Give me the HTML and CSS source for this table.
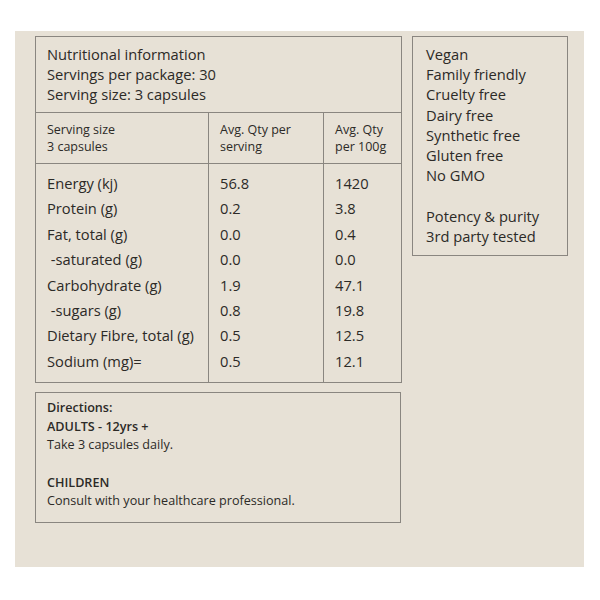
FILE: index.html
```html
<!DOCTYPE html>
<html lang="en">
<head>
<meta charset="utf-8">
<title>Nutritional information</title>
<link rel="stylesheet" href="styles.css">
</head>
<body>
<div class="panel">
  <div class="left">
    <table class="nutri">
      <colgroup>
        <col class="c1"><col class="c2"><col class="c3">
      </colgroup>
      <thead>
        <tr>
          <th colspan="3" class="title">Nutritional information<br>Servings per package: 30<br>Serving size: 3 capsules</th>
        </tr>
        <tr class="colhead">
          <th>Serving size<br>3 capsules</th>
          <th>Avg. Qty per<br>serving</th>
          <th>Avg. Qty<br>per 100g</th>
        </tr>
      </thead>
      <tbody>
        <tr><td>Energy (kj)</td><td>56.8</td><td>1420</td></tr>
        <tr><td>Protein (g)</td><td>0.2</td><td>3.8</td></tr>
        <tr><td>Fat, total (g)</td><td>0.0</td><td>0.4</td></tr>
        <tr><td>&nbsp;-saturated (g)</td><td>0.0</td><td>0.0</td></tr>
        <tr><td>Carbohydrate (g)</td><td>1.9</td><td>47.1</td></tr>
        <tr><td>&nbsp;-sugars (g)</td><td>0.8</td><td>19.8</td></tr>
        <tr><td>Dietary Fibre, total (g)</td><td>0.5</td><td>12.5</td></tr>
        <tr><td>Sodium (mg)=</td><td>0.5</td><td>12.1</td></tr>
      </tbody>
    </table>
    <div class="directions">
      <p class="b">Directions:</p>
      <p class="b">ADULTS - 12yrs +</p>
      <p>Take 3 capsules daily.</p>
      <p>&nbsp;</p>
      <p class="b">CHILDREN</p>
      <p>Consult with your healthcare professional.</p>
    </div>
  </div>
  <div class="claims">
    <p>Vegan</p>
    <p>Family friendly</p>
    <p>Cruelty free</p>
    <p>Dairy free</p>
    <p>Synthetic free</p>
    <p>Gluten free</p>
    <p>No GMO</p>
    <p>&nbsp;</p>
    <p>Potency &amp; purity</p>
    <p>3rd party tested</p>
  </div>
</div>
</body>
</html>
```

FILE: styles.css
```css
html, body {
  margin: 0;
  padding: 0;
  background: #ffffff;
}

body {
  font-family: "Open Sans", "Noto Sans", sans-serif;
  color: #2c2a27;
}

p {
  margin: 0;
}

.panel {
  box-sizing: border-box;
  width: 569px;
  height: 536px;
  margin: 31px 0 0 15px;
  padding: 5px 16px 0 20px;
  background: #e7e1d6;
  display: flex;
  align-items: flex-start;
  gap: 11px;
}

.left {
  width: 366px;
  display: flex;
  flex-direction: column;
  gap: 9px;
}

.nutri {
  width: 366px;
  table-layout: fixed;
  border-collapse: collapse;
  border: 1px solid #8a8680;
  font-size: 14.7px;
}

.c1 { width: 173px; }
.c2 { width: 115px; }
.c3 { width: 78px; }

.nutri th,
.nutri td {
  text-align: left;
  font-weight: 400;
  padding: 0 0 0 11px;
  vertical-align: top;
  white-space: nowrap;
}

.nutri .title {
  line-height: 20px;
  padding-top: 7px;
  padding-bottom: 8px;
  border-bottom: 1px solid #8a8680;
}

.colhead th {
  font-size: 12.5px;
  line-height: 17px;
  padding-top: 8px;
  padding-bottom: 8px;
  border-bottom: 1px solid #8a8680;
  border-left: 1px solid #8a8680;
}

.colhead th:first-child {
  border-left: none;
}

.nutri td {
  line-height: 25.4px;
  border-left: 1px solid #8a8680;
}

.nutri td:first-child {
  border-left: none;
}

.nutri tbody tr:first-child td {
  padding-top: 7px;
}

.nutri tbody tr:last-child td {
  padding-bottom: 8px;
}

.directions {
  box-sizing: border-box;
  width: 366px;
  height: 131px;
  border: 1px solid #8a8680;
  padding: 6px 11px 0 11px;
  font-size: 12.6px;
  line-height: 18.6px;
}

.directions .b {
  font-weight: 600;
}

.claims {
  box-sizing: border-box;
  width: 156px;
  border: 1px solid #8a8680;
  padding: 7px 8px 9px 13px;
  font-size: 14.7px;
  line-height: 20.2px;
}
```
